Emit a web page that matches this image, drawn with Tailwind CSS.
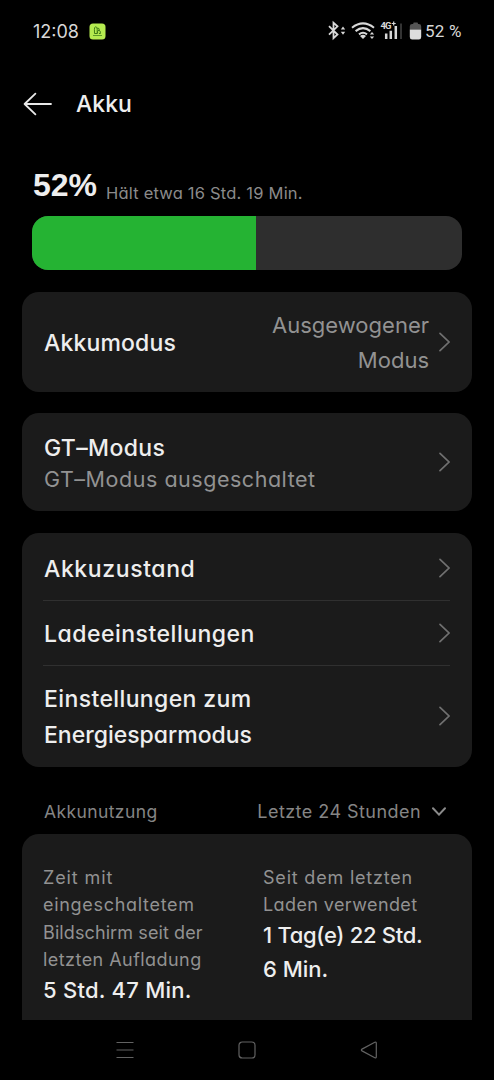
<!DOCTYPE html>
<html lang="de">
<head>
<meta charset="utf-8">
<title>Akku</title>
<script src="https://cdn.jsdelivr.net/npm/@tailwindcss/browser@4"></script>
</head>
<body class="h-[1080px] w-[494px] overflow-hidden bg-black font-['Inter',sans-serif] text-[#eeeeee] [font-feature-settings:'cv11','ss03'] flex flex-col whitespace-nowrap">

  <!-- Status bar -->
  <div class="flex h-[62px] shrink-0 items-center pl-[33px] pr-[31px] text-[#d8d8d8]">
    <span class="w-[56px] pt-[2px] text-[18px] leading-[20px]">12:08</span>
    <svg class="size-[17px]" viewBox="0 0 17 17" fill="none">
      <rect x=".5" y=".5" width="16" height="16" rx="3.5" fill="#b5eb50"/>
      <path d="M5.5 10.5H8.2V6.3Q8.2 3.8 6.7 3.8Q5.4 3.8 5.4 6.3ZM8.2 5.2Q10.5 4.6 10.3 7.4M8.6 10.5V8.5Q8.7 7.3 10 7.3Q11.7 7.5 11.4 10.5H10" stroke="#3f7d16"/>
      <path d="M4 12.5H13" stroke="#5f9a28"/>
    </svg>
    <div class="ml-auto flex items-center">
      <svg class="h-[22px] w-[98px]" viewBox="0 0 98 22" fill="none">
        <path d="M2 6.2L10.5 14.5L6.5 18.2V2.8L10.5 6.4L2 14.7" stroke="#d8d8d8" stroke-width="1.8"/>
        <path d="M13.8 9.5L16 6.6L18.2 9.5ZM13.8 11.8L16 14.7L18.2 11.8Z" fill="#d8d8d8"/>
        <g stroke="#d8d8d8" stroke-width="2">
          <path d="M25 7.7Q36 -1 47 7.7M28.6 11.1Q36 5.2 43.4 11.1M32 14.4Q36 11.2 40 14.4"/>
        </g>
        <path d="M33 16Q36 13.6 39 16L36 19Z" fill="#d8d8d8"/>
        <path d="M42.8 14.6L45 12L47.2 14.6ZM42.8 16.4L45 19L47.2 16.4Z" fill="#d8d8d8"/>
        <text x="53.5" y="9" font-family="Roboto, sans-serif" font-size="9.5" font-weight="700" fill="#d8d8d8" textLength="11">4G</text>
        <path d="M66.7 1.5V5.5M64.7 3.5H68.7" stroke="#d8d8d8" stroke-width="1.2"/>
        <path d="M59.2 13.4V19M63.8 10.8V19M68.8 6V19" stroke="#d8d8d8" stroke-width="2.5"/>
        <path d="M74 3.5V19" stroke="#333333" stroke-width="2"/>
        <path d="M82.8 9.5V6.4Q82.8 4 85.2 4H86.3V3Q86.3 2.5 87 2.5H90.2Q90.9 2.5 90.9 3V4H91.8Q94.2 4 94.2 6.4V9.5Z" fill="#555555"/>
        <path d="M82.8 9.5H94.2V17Q94.2 19.5 91.8 19.5H85.2Q82.8 19.5 82.8 17Z" fill="#dddddd"/>
      </svg>
      <span class="w-[38px] text-[17px] leading-[20px] tracking-[0.2px] font-['Roboto',sans-serif]">52 %</span>
    </div>
  </div>

  <!-- Title bar -->
  <header class="flex h-[83px] shrink-0 items-center pl-[23px]">
    <svg class="mr-[24px] h-[24px] w-[29px]" viewBox="0 0 29 24" fill="none" stroke="#e8e8e8" stroke-width="1.8" stroke-linecap="round" stroke-linejoin="round"><path d="M12.4 1.6L1.6 12L12.4 22.4M1.6 12H28"/></svg>
    <h1 class="text-[23px] leading-[28px] font-medium">Akku</h1>
  </header>

  <!-- Charge level -->
  <section class="flex h-[147px] shrink-0 flex-col px-[32px] pt-[19px]">
    <div class="flex h-[52px] items-baseline">
      <span class="w-[74px] pl-px text-[32px] leading-[42px] font-bold font-['Liberation_Sans',sans-serif]">52%</span>
      <span class="text-[16.5px] tracking-[0.2px] text-[#8b8b8b] translate-y-[2.5px]">Hält etwa 16 Std. 19 Min.</span>
    </div>
    <div class="h-[54px] overflow-hidden rounded-[16px] bg-[#2e2e2e]">
      <div class="h-full bg-[#25b333]" style="width:52%"></div>
    </div>
  </section>

  <main class="flex flex-1 flex-col px-[22px]">
    <section class="flex h-[100px] shrink-0 items-center rounded-[17px] bg-[#1b1b1b] pl-[22px] pr-[22px]">
      <span class="flex-1 pt-[2px] text-[23px] leading-[36px] font-medium tracking-[0.15px]">Akkumodus</span>
      <span class="mr-[10px] pt-px text-right text-[22px] leading-[34.5px] text-[#929292]">Ausgewogener<br>Modus</span>
      <svg class="h-[20px] w-[11px]" viewBox="0 0 11 20" fill="none" stroke="#707070" stroke-width="1.7" stroke-linecap="round"><path d="M1 1.3L10 10L1 18.7"/></svg>
    </section>

    <section class="mt-[21px] flex h-[98px] shrink-0 items-center rounded-[17px] bg-[#1b1b1b] pl-[22px] pr-[22px]">
      <div class="flex flex-1 flex-col pt-[2px]">
        <span class="text-[23px] leading-[32px] font-medium tracking-[0.35px]">GT–Modus</span>
        <span class="text-[21.5px] leading-[31px] tracking-[0.53px] text-[#929292]">GT–Modus ausgeschaltet</span>
      </div>
      <svg class="h-[20px] w-[11px]" viewBox="0 0 11 20" fill="none" stroke="#707070" stroke-width="1.7" stroke-linecap="round"><path d="M1 1.3L10 10L1 18.7"/></svg>
    </section>

    <section class="mt-[22px] flex h-[234px] shrink-0 flex-col rounded-[17px] bg-[#1b1b1b] pl-[21px] pr-[22px] text-[23px] leading-[36px] font-medium">
      <div class="flex h-[68px] items-center border-b border-[#303030]">
        <span class="flex-1 pl-px tracking-[0.6px] pt-[4px]">Akkuzustand</span>
        <svg class="h-[20px] w-[11px] translate-y-px" viewBox="0 0 11 20" fill="none" stroke="#707070" stroke-width="1.7" stroke-linecap="round"><path d="M1 1.3L10 10L1 18.7"/></svg>
      </div>
      <div class="flex h-[65px] items-center border-b border-[#303030]">
        <span class="flex-1 pl-px tracking-[0.5px] pt-[2px]">Ladeeinstellungen</span>
        <svg class="h-[20px] w-[11px]" viewBox="0 0 11 20" fill="none" stroke="#707070" stroke-width="1.7" stroke-linecap="round"><path d="M1 1.3L10 10L1 18.7"/></svg>
      </div>
      <div class="flex h-[101px] items-center">
        <div class="flex flex-1 flex-col pl-px"><span class="tracking-[0.38px]">Einstellungen zum</span><span>Energiesparmodus</span></div>
        <svg class="h-[20px] w-[11px] -translate-y-px" viewBox="0 0 11 20" fill="none" stroke="#707070" stroke-width="1.7" stroke-linecap="round"><path d="M1 1.3L10 10L1 18.7"/></svg>
      </div>
    </section>

    <div class="flex h-[67px] shrink-0 items-center pt-[23px] pl-[22px] pr-[26px] text-[#858585]">
      <span class="flex-1 text-[17.5px] leading-[24px] tracking-[0.4px]">Akkunutzung</span>
      <span class="mr-[11px] text-[18px] leading-[24px] tracking-[0.45px]">Letzte 24 Stunden</span>
      <svg class="h-[9px] w-[14px] -translate-y-px" viewBox="0 0 14 9" fill="none" stroke="#8a8a8a" stroke-width="2" stroke-linecap="round"><path d="M1 1.2L7 7.6L13 1.2"/></svg>
    </div>

    <section class="flex h-[186px] shrink-0 rounded-t-[17px] bg-[#1b1b1b] pt-[30px] pl-[21px]">
      <div class="flex w-[220px] flex-col">
        <div class="flex flex-col text-[18px] leading-[27.3px] text-[#929292]">
          <span class="tracking-[0.9px]">Zeit mit</span>
          <span class="tracking-[0.7px]">eingeschaltetem</span>
          <span class="tracking-[0.1px]">Bildschirm seit der</span>
          <span class="tracking-[0.45px]">letzten Aufladung</span>
        </div>
        <span class="text-[22px] leading-[34px] font-medium tracking-[0.25px]">5 Std. 47 Min.</span>
      </div>
      <div class="flex flex-col">
        <div class="flex flex-col text-[18px] leading-[27.3px] text-[#929292]">
          <span class="tracking-[0.8px]">Seit dem letzten</span>
          <span class="tracking-[0.4px]">Laden verwendet</span>
        </div>
        <span class="text-[22px] leading-[34.3px] font-medium tracking-[-0.3px] -mt-px">1 Tag(e) 22 Std.</span>
        <span class="text-[22px] leading-[34.3px] font-medium">6 Min.</span>
      </div>
    </section>
  </main>

  <!-- System navigation -->
  <nav class="flex h-[60px] shrink-0 items-center justify-between pl-[116px] pr-[116px]">
    <svg class="size-[18px]" viewBox="0 0 18 18" fill="none" stroke="#626262" stroke-width="1.2"><path d="M.5 1.5H17.5M.5 9H17.5M.5 16.5H17.5"/></svg>
    <svg class="size-[18px]" viewBox="0 0 18 18" fill="none" stroke="#626262" stroke-width="1.2"><rect x="1" y="1" width="16" height="16" rx="3.3"/></svg>
    <svg class="size-[18px]" viewBox="0 0 18 18" fill="none" stroke="#626262" stroke-width="1.2" stroke-linejoin="round"><path d="M14.8 1.3L2 8.1Q.7 9 2 9.9L14.8 16.7Q16.3 17.2 16.3 15.7V2.3Q16.3 .8 14.8 1.3Z"/></svg>
  </nav>
</body>
</html>
